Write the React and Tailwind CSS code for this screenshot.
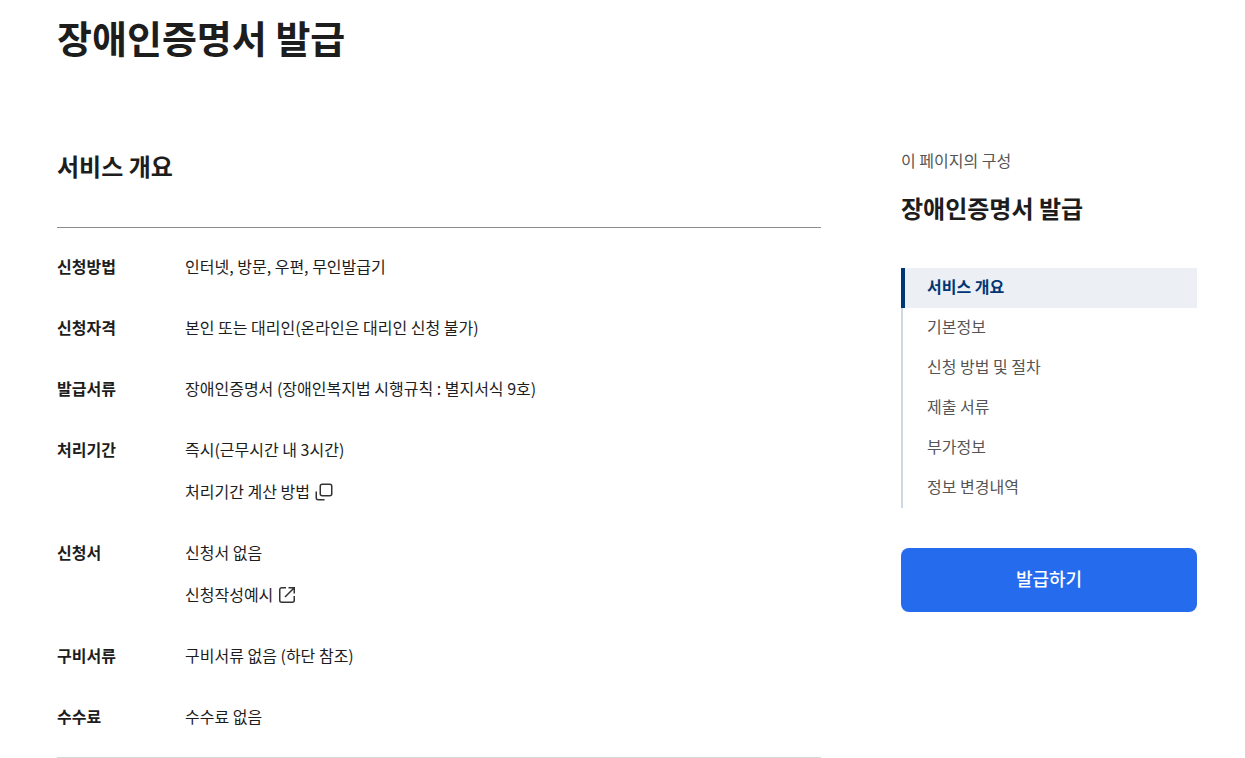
const overview = [
  { label: '신청방법', text: '인터넷, 방문, 우편, 무인발급기' },
  { label: '신청자격', text: '본인 또는 대리인(온라인은 대리인 신청 불가)' },
  { label: '발급서류', text: '장애인증명서 (장애인복지법 시행규칙 : 별지서식 9호)' },
  { label: '처리기간', text: '즉시(근무시간 내 3시간)', link: '처리기간 계산 방법', icon: 'popup' },
  { label: '신청서', text: '신청서 없음', link: '신청작성예시', icon: 'external' },
  { label: '구비서류', text: '구비서류 없음 (하단 참조)' },
  { label: '수수료', text: '수수료 없음' },
];

const sections = ['서비스 개요', '기본정보', '신청 방법 및 절차', '제출 서류', '부가정보', '정보 변경내역'];

const PopupIcon = () => (
  <svg width="20" height="20" viewBox="0 0 20 20" fill="none" stroke="#333" strokeWidth="1.5" aria-hidden="true">
    <rect x="6.25" y="2.25" width="11.5" height="11.5" rx="2" />
    <path d="M2.25 9.5v6.25a2 2 0 0 0 2 2h6.25" />
  </svg>
);

const ExternalIcon = () => (
  <svg width="20" height="20" viewBox="0 0 20 20" fill="none" stroke="#333" strokeWidth="1.5" aria-hidden="true">
    <path d="M9 2.75H4.75a2 2 0 0 0-2 2v10.5a2 2 0 0 0 2 2h10.5a2 2 0 0 0 2-2V11" />
    <path d="M11.5 2.75h5.75V8.5M17 3l-9 9" />
  </svg>
);

const App = () => {
  return (
    <div className="bg-white pt-[9px] pr-12 pl-[57px] font-['Noto_Sans_CJK_KR',sans-serif] text-base leading-[25px] text-[#1d1d1d]">
      <h1 className="text-[38px] leading-[56px] font-bold">장애인증명서 발급</h1>

      <div className="mt-[83px] flex items-start gap-20">
        <main className="min-w-0 flex-1">
          <h2 className="text-2xl leading-9 font-bold">서비스 개요</h2>
          <dl className="mt-[43px] flex flex-col gap-9 border-y border-t-[#8e8e8e] border-b-[#d8d8d8] pt-[26px] pb-7">
            {overview.map((item) => (
              <div key={item.label} className="flex">
                <dt className="w-32 shrink-0 font-bold">{item.label}</dt>
                <dd>
                  <p>{item.text}</p>
                  {item.link && (
                    <a href="#" className="mt-[17px] flex items-center gap-1">
                      {item.link}
                      {item.icon === 'popup' ? <PopupIcon /> : <ExternalIcon />}
                    </a>
                  )}
                </dd>
              </div>
            ))}
          </dl>
        </main>

        <aside className="w-[296px] shrink-0">
          <p className="text-[#555]">이 페이지의 구성</p>
          <h2 className="mt-[17px] text-2xl leading-9 font-bold">장애인증명서 발급</h2>
          <nav className="mt-[42px]">
            <ul>
              {sections.map((name, index) => (
                <li key={name}>
                  <a
                    href="#"
                    className={
                      index === 0
                        ? 'flex h-10 items-center border-l-4 border-[#003675] bg-[#ecf0f5] pb-1 pl-[22px] font-bold text-[#003675]'
                        : 'flex h-10 items-center border-l-2 border-[#cdd8e5] pb-1 pl-6 text-[#555]'
                    }
                  >
                    {name}
                  </a>
                </li>
              ))}
            </ul>
          </nav>
          <button type="button" className="mt-10 h-16 w-full rounded-lg bg-[#256bed] pb-1 text-lg font-medium text-white">
            발급하기
          </button>
        </aside>
      </div>
    </div>
  );
};

export default App;
